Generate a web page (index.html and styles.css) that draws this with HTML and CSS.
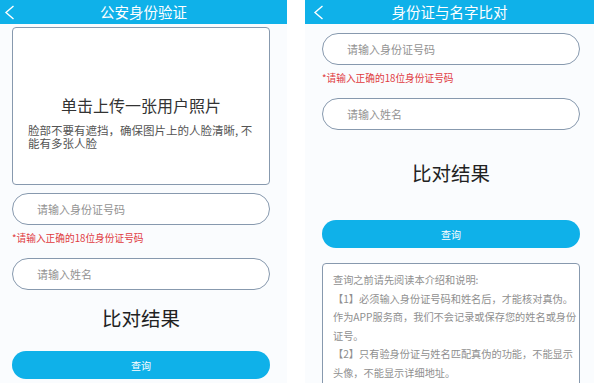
FILE: index.html
```html
<!DOCTYPE html>
<html lang="zh-CN">
<head>
    <meta charset="UTF-8">
    <meta name="viewport" content="width=device-width, initial-scale=1.0">
    <title>身份验证</title>
    <link rel="stylesheet" href="styles.css">
</head>
<body>

<div class="screens">
    <!-- Screen 1: face photo verification -->
    <div class="screen screen-face">
        <div class="topbar">
            <svg class="back" width="11" height="15" viewBox="0 0 11 15"><polyline points="9.5,1 2,7.5 9.5,14" fill="none" stroke="#fff" stroke-width="1.4"/></svg>
            <span class="topbar-title">公安身份验证</span>
        </div>
        <div class="body">
            <div class="upload">
                <div class="upload-title">单击上传一张用户照片</div>
                <div class="upload-tip">脸部不要有遮挡，确保图片上的人脸清晰, 不能有多张人脸</div>
            </div>
            <input class="field field-first" type="text" placeholder="请输入身份证号码">
            <div class="hint">*请输入正确的18位身份证号码</div>
            <input class="field" type="text" placeholder="请输入姓名">
            <div class="result">比对结果</div>
            <button class="query">查询</button>
        </div>
    </div>

    <!-- Screen 2: ID number and name check -->
    <div class="screen screen-name">
        <div class="topbar">
            <svg class="back" width="11" height="15" viewBox="0 0 11 15"><polyline points="9.5,1 2,7.5 9.5,14" fill="none" stroke="#fff" stroke-width="1.4"/></svg>
            <span class="topbar-title">身份证与名字比对</span>
        </div>
        <div class="body">
            <input class="field field-first" type="text" placeholder="请输入身份证号码">
            <div class="hint">*请输入正确的18位身份证号码</div>
            <input class="field" type="text" placeholder="请输入姓名">
            <div class="result">比对结果</div>
            <button class="query">查询</button>
            <div class="notice">查询之前请先阅读本介绍和说明:
【1】必须输入身份证号码和姓名后，才能核对真伪。
作为APP服务商，我们不会记录或保存您的姓名或身份
证号。
【2】只有验身份证与姓名匹配真伪的功能，不能显示
头像，不能显示详细地址。</div>
        </div>
    </div>
</div>

</body>
</html>
```

FILE: styles.css
```css
body {
    margin: 0;
    background: #fff;
    font-family: "Noto Sans CJK SC", "Noto Sans", sans-serif;
}
.screens {
    display: flex;
    gap: 18px;
    height: 383px;
    overflow: hidden;
}
.screen {
    height: 383px;
    background: #fafcfe;
    overflow: hidden;
}
.screen-face {
    width: 287px;
}
.screen-name {
    width: 289px;
}
.topbar {
    height: 24px;
    background: #0fb1e9;
    display: grid;
    grid-template-columns: 30px 1fr 30px;
    align-items: center;
}
.back {
    display: block;
}
.screen-face .back {
    margin-left: 4px;
}
.screen-name .back {
    margin-left: 8px;
}
.topbar-title {
    color: #fff;
    font-size: 14.5px;
    text-align: center;
    line-height: 24px;
}
.body {
    width: 258px;
    display: flex;
    flex-direction: column;
}
.screen-face .body {
    margin-left: 12px;
}
.screen-name .body {
    margin-left: 17px;
}
/* photo upload area */
.upload {
    margin-top: 3px;
    height: 158px;
    box-sizing: border-box;
    border: 1px solid #8799ae;
    border-radius: 4px;
    background: #fff;
    padding: 67px 15px 0 15px;
}
.upload-title {
    font-size: 16px;
    line-height: 20px;
    color: #333;
    text-align: center;
}
.upload-tip {
    margin-top: 9px;
    font-size: 11.5px;
    line-height: 13px;
    color: #555;
}
.field {
    display: block;
    height: 32px;
    box-sizing: border-box;
    border: 1px solid #8799ae;
    border-radius: 16px;
    background: #fff;
    padding: 0 0 0 24px;
    font-family: inherit;
    font-size: 11px;
    outline: none;
}
.field::placeholder {
    color: #939393;
}
.screen-face .field-first {
    margin-top: 8px;
}
.screen-name .field-first {
    margin-top: 9px;
}
.hint {
    padding: 7px 0 13px 0;
    font-size: 9.7px;
    line-height: 13px;
    color: #e03a3e;
}
.result {
    font-size: 19.5px;
    line-height: 26px;
    color: #222;
    text-align: center;
}
.screen-face .result {
    margin-top: 15px;
}
.screen-name .result {
    margin-top: 30px;
}
.query {
    height: 28px;
    border: none;
    border-radius: 14px;
    background: #0fb1e9;
    color: #fff;
    font-family: inherit;
    font-size: 10px;
}
.screen-face .query {
    margin-top: 20px;
}
.screen-name .query {
    margin-top: 34px;
}
/* notes under the query button */
.notice {
    margin-top: 15px;
    height: 140px;
    border: 1px solid #8799ae;
    border-radius: 4px;
    background: #fff;
    padding: 7px 4px 0 10px;
    font-size: 10.2px;
    line-height: 18.5px;
    color: #8f8f8f;
    white-space: pre;
}
```
